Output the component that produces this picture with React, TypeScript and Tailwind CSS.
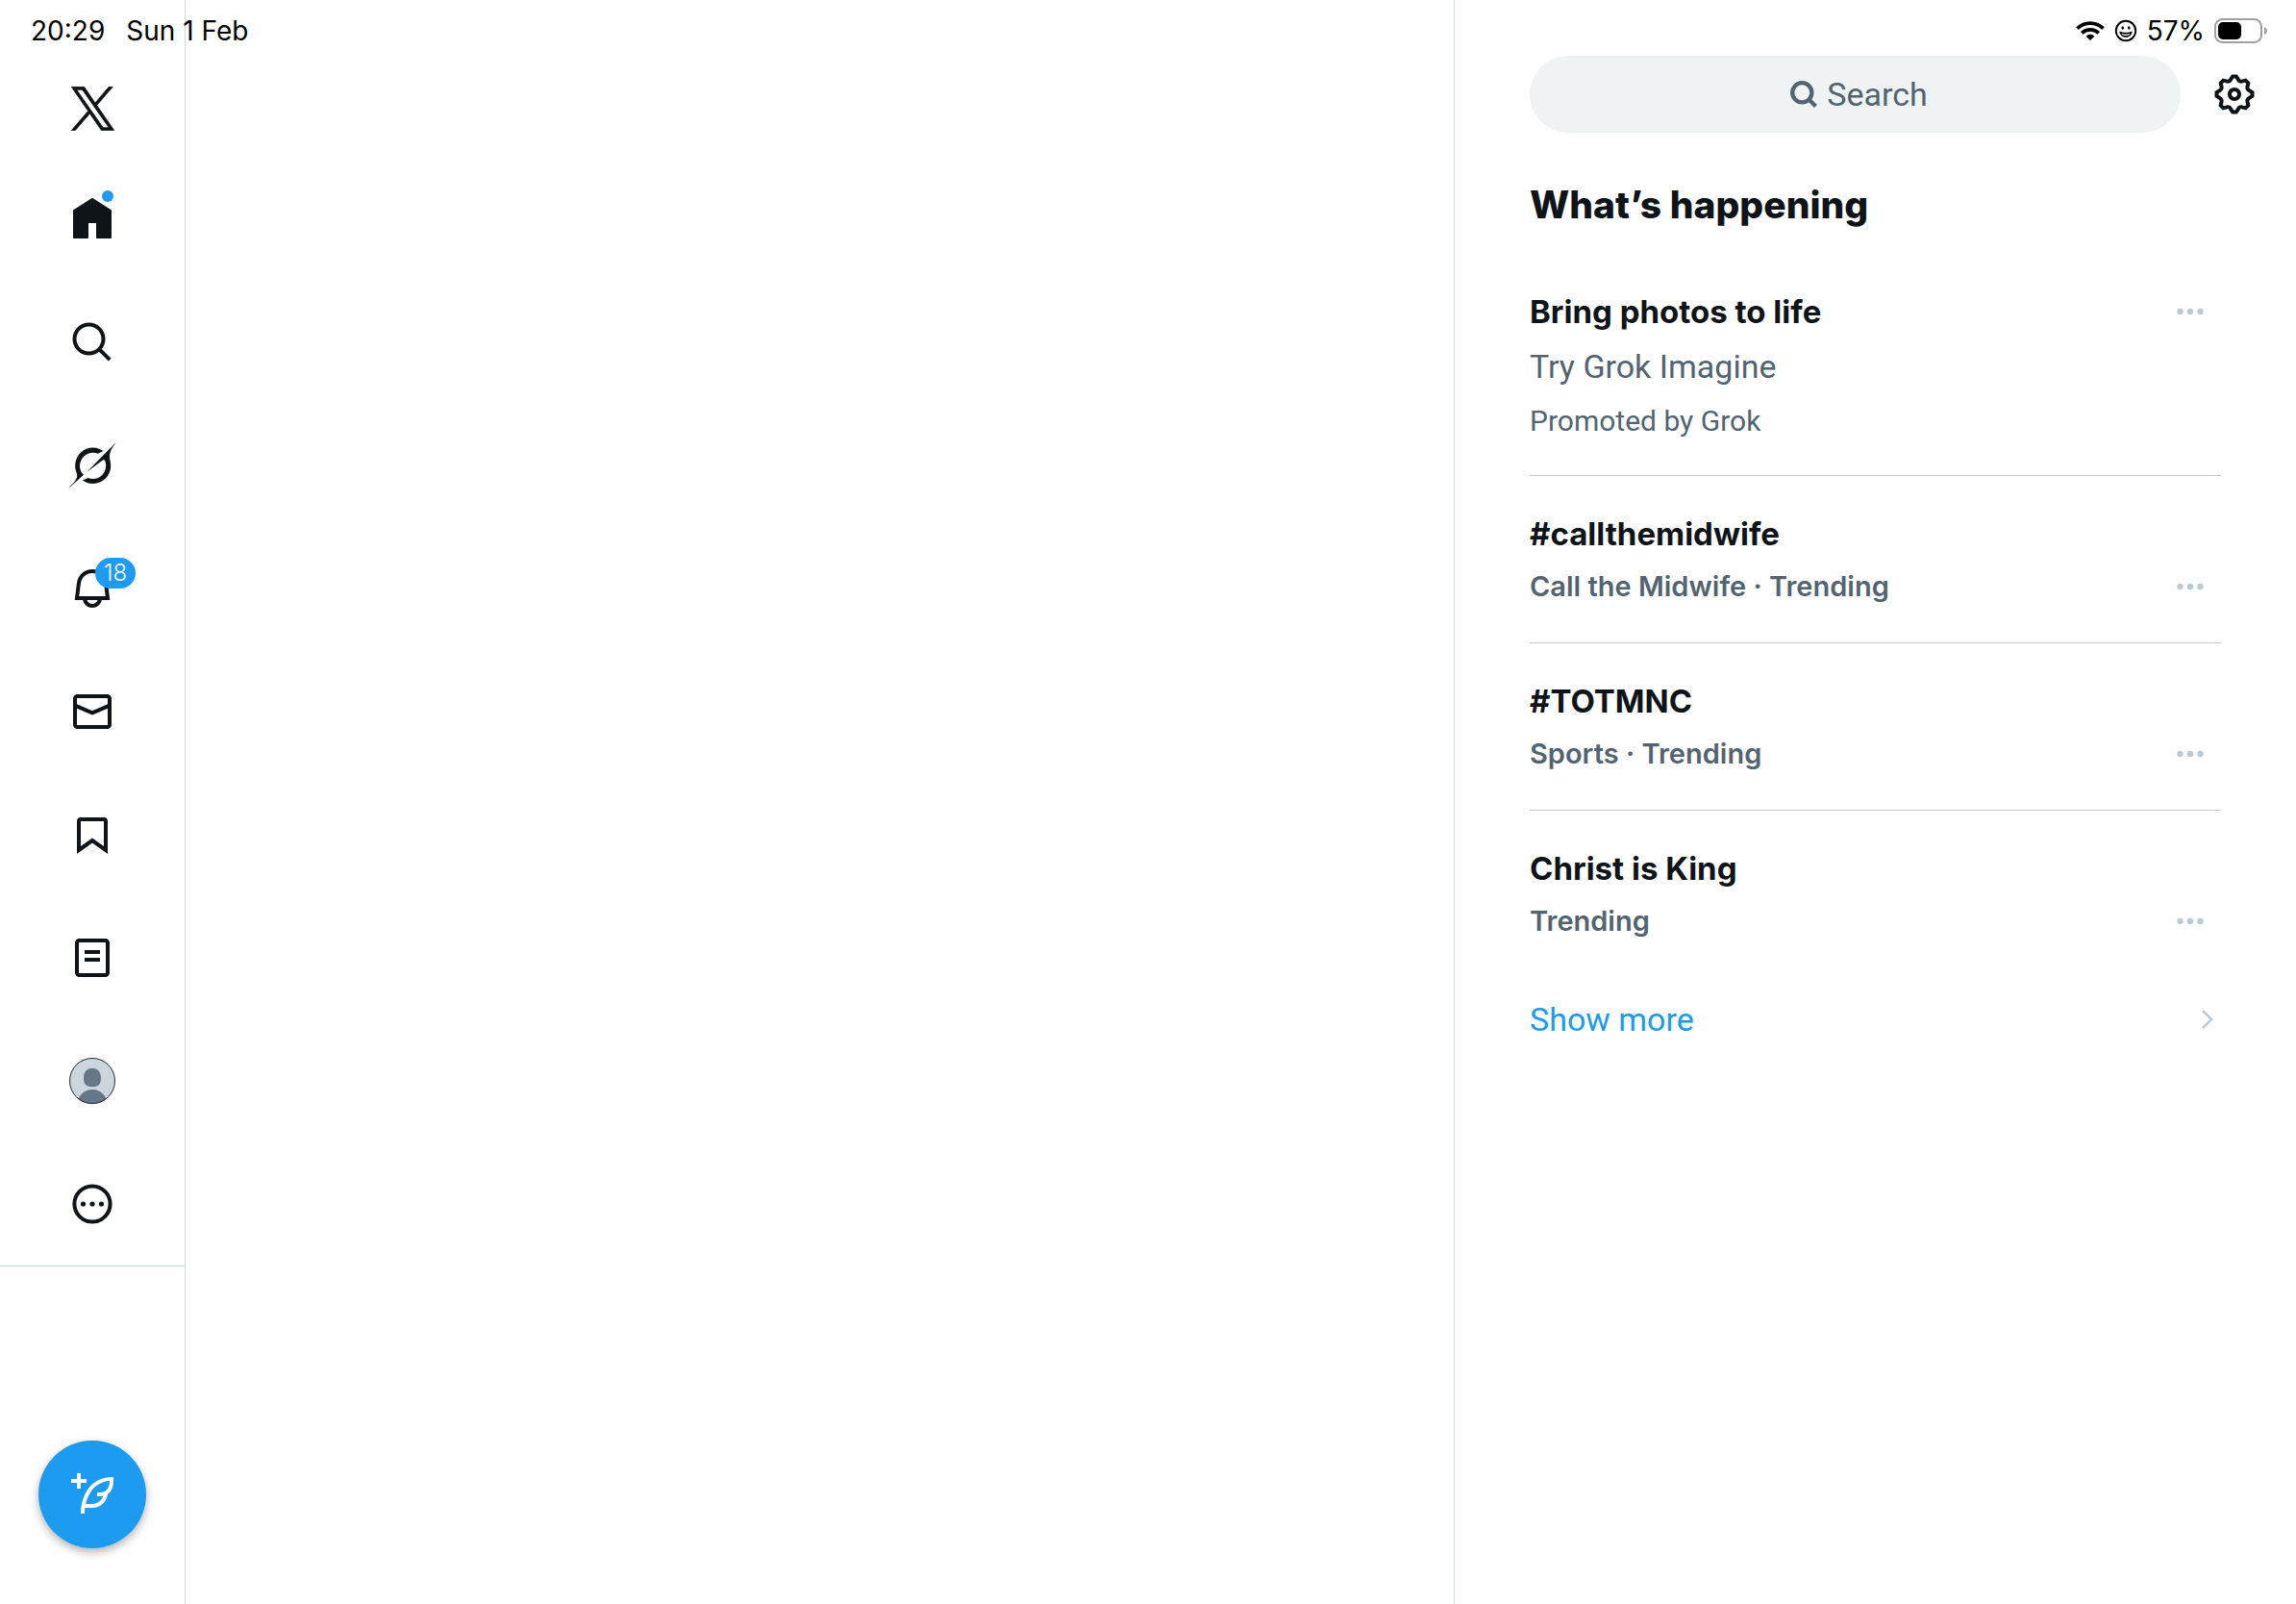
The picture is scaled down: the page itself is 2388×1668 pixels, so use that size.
import React from "react";

type IconProps = { className?: string; children: React.ReactNode };

const Icon: React.FC<IconProps> = ({ className = "size-12", children }) => (
  <svg viewBox="0 0 24 24" className={className} fill="currentColor" aria-hidden="true">
    {children}
  </svg>
);

const XLogo = () => (
  <svg viewBox="-10 -10 1220 1247" className="h-[46px] w-[45px]" fill="currentColor" stroke="currentColor" strokeWidth="22" aria-hidden="true">
    <path d="M714.163 519.284L1160.89 0H1055.03L667.137 450.887L357.328 0H0L468.492 681.821L0 1226.37H105.866L515.491 750.218L842.672 1226.37H1200L714.137 519.284H714.163ZM569.165 687.828L521.697 619.934L144.011 79.6944H306.615L611.412 515.685L658.88 583.579L1055.08 1150.3H892.476L569.165 687.854V687.828Z" />
  </svg>
);

const HomeIcon = () => (
  <Icon>
    <path d="M12 .9 2 7.3v14.2c0 .28.22.5.5.5h7c.28 0 .5-.22.5-.5V14h4v7.5c0 .28.22.5.5.5h7c.28 0 .5-.22.5-.5V7.3z" />
  </Icon>
);

const SearchIcon = () => (
  <Icon>
    <g fill="none" stroke="currentColor" strokeWidth="2">
      <circle cx="10.25" cy="10.25" r="7.5" />
      <path d="M15.6 15.6l5.5 5.5" />
    </g>
  </Icon>
);

const GrokIcon = () => (
  <svg viewBox="0 0 33 32" className="h-12 w-[50px]" fill="currentColor" aria-hidden="true">
    <path d="M12.745 20.54l10.97-8.19c.539-.4 1.307-.244 1.564.38 1.349 3.288.746 7.241-1.938 9.955-2.683 2.714-6.417 3.31-9.83 1.954l-3.728 1.745c5.347 3.697 11.84 2.782 15.898-1.324 3.219-3.255 4.216-7.692 3.284-11.693l.008.009c-1.351-5.878.332-8.227 3.782-13.031L33 0l-4.54 4.59v-.014L12.743 20.544m-2.263 1.987c-3.837-3.707-3.175-9.446.1-12.755 2.42-2.449 6.388-3.448 9.852-1.979l3.72-1.737c-.67-.49-1.53-1.017-2.515-1.387-4.455-1.854-9.789-.931-13.41 2.728-3.483 3.523-4.579 8.94-2.697 13.561 1.405 3.454-.899 5.898-3.22 8.364C1.49 30.2.666 31.074 0 32l10.478-9.466" />
  </svg>
);

const BellIcon = () => (
  <Icon>
    <path d="M19.993 9.042C19.48 5.017 16.054 2 11.996 2s-7.49 3.021-7.999 7.051L2.866 18H7.1c.463 2.282 2.481 4 4.9 4s4.437-1.718 4.9-4h4.236l-1.143-8.958zM12 20c-1.306 0-2.417-.835-2.829-2h5.658c-.412 1.165-1.523 2-2.829 2zm-6.866-4l.847-6.698C6.364 6.272 8.941 4 11.996 4s5.627 2.268 6.013 5.295L18.864 16H5.134z" />
  </Icon>
);

const MailIcon = () => (
  <Icon>
    <g fill="none" stroke="currentColor" strokeWidth="2">
      <rect x="3" y="4" width="18" height="16" rx="1.3" />
      <path d="M3 8.8l9 3.9 9-3.9" />
    </g>
  </Icon>
);

const BookmarkIcon = () => (
  <Icon>
    <path d="M5 20V5a1 1 0 0 1 1-1h12a1 1 0 0 1 1 1v15l-7-5z" fill="none" stroke="currentColor" strokeWidth="2" />
  </Icon>
);

const ListIcon = () => (
  <Icon>
    <rect x="4" y="3" width="16" height="18" rx="1.3" fill="none" stroke="currentColor" strokeWidth="2" />
    <path d="M8 8h8v2H8zM8 12h8v2H8z" />
  </Icon>
);

const Avatar = () => (
  <svg viewBox="0 0 48 48" className="size-12" aria-hidden="true">
    <clipPath id="avatar">
      <circle cx="24" cy="24" r="24" />
    </clipPath>
    <g clipPath="url(#avatar)">
      <rect width="48" height="48" fill="#ccd6dd" />
      <path d="M24 10.7c-5.4 0-9 4-9 9.6 0 6.4 1.8 10 9 10s9-3.6 9-10c0-5.6-3.6-9.6-9-9.6z" fill="#667788" />
      <path d="M8 48c1.5-9.5 8-15 16-15s14.5 5.5 16 15z" fill="#667788" />
    </g>
    <circle cx="24" cy="24" r="23.5" fill="none" stroke="#2b333a" />
  </svg>
);

const MoreCircleIcon = () => (
  <Icon>
    <circle cx="12" cy="12" r="9.3" fill="none" stroke="currentColor" strokeWidth="2" />
    <circle cx="7.25" cy="12" r="1.3" />
    <circle cx="12" cy="12" r="1.3" />
    <circle cx="16.75" cy="12" r="1.3" />
  </Icon>
);

const ComposeIcon = () => (
  <Icon>
    <path d="M23 3c-6.62-.1-10.38 2.421-13.05 6.03C7.29 12.61 6 17.331 6 22h2c0-1.007.07-2.012.19-3H12c4.1 0 7.48-3.1 7.94-7.054C22.79 10.147 23.17 6.359 23 3zm-7 8h-1.5v2H16c.63-.016 1.2-.08 1.72-.188C16.95 15.24 14.68 17 12 17H8.55c.57-2.512 1.57-4.851 3-6.78 2.16-2.912 5.29-4.911 9.45-5.187C20.95 8.079 19.9 11 16 11zM4 9V6H1V4h3V1h2v3h3v2H6v3H4z" />
  </Icon>
);

const GearIcon = () => (
  <Icon>
    <path d="M10.54 1.75h2.92l1.57 2.36c.11.17.32.25.53.21l2.53-.59 2.17 2.17-.58 2.54c-.05.2.04.41.21.53l2.36 1.57v2.92l-2.36 1.57c-.17.12-.26.33-.21.53l.58 2.54-2.17 2.17-2.53-.59c-.21-.04-.42.04-.53.21l-1.57 2.36h-2.92l-1.58-2.36c-.11-.17-.32-.25-.52-.21l-2.54.59-2.17-2.17.58-2.54c.05-.2-.03-.41-.21-.53l-2.35-1.57v-2.92L4.1 8.97c.18-.12.26-.33.21-.53L3.73 5.9 5.9 3.73l2.54.59c.2.04.41-.04.52-.21l1.58-2.36zm1.07 2l-.98 1.47C10.05 6.08 9 6.5 7.99 6.27l-1.46-.34-.6.6.33 1.46c.24 1.01-.18 2.07-1.05 2.64l-1.46.98v.78l1.46.98c.87.57 1.29 1.63 1.05 2.64l-.33 1.46.6.6 1.46-.34c1.01-.23 2.06.19 2.64 1.05l.98 1.47h.78l.97-1.47c.58-.86 1.63-1.28 2.65-1.05l1.45.34.61-.6-.34-1.46c-.23-1.01.18-2.07 1.05-2.64l1.47-.98v-.78l-1.47-.98c-.87-.57-1.28-1.63-1.05-2.64l.34-1.46-.61-.6-1.45.34c-1.02.23-2.07-.19-2.65-1.05l-.97-1.47h-.78zM12 10.5c-.83 0-1.5.67-1.5 1.5s.67 1.5 1.5 1.5c.83 0 1.5-.67 1.5-1.5s-.67-1.5-1.5-1.5zM8.5 12c0-1.93 1.56-3.5 3.5-3.5 1.93 0 3.5 1.57 3.5 3.5s-1.57 3.5-3.5 3.5c-1.94 0-3.5-1.57-3.5-3.5z" />
  </Icon>
);

const StatusBar = () => (
  <header className="absolute inset-x-0 top-0 z-10 flex h-16 items-center justify-between pr-[30px] pl-8 text-[28px] leading-8 text-black">
    <div className="flex gap-[22px]">
      <span>20:29</span>
      <span>Sun 1 Feb</span>
    </div>
    <div className="flex items-center gap-[10px]">
      <svg viewBox="0 0 30 20" className="h-5 w-[30px]" aria-label="Wi-Fi">
        <g fill="none" stroke="#000" strokeWidth="3.7">
          <path d="M1.5 7.6a19.2 19.2 0 0 1 27 0" />
          <path d="M6.3 12.4a12.4 12.4 0 0 1 17.4 0" />
        </g>
        <path d="M15 20l-4.4-4.3a6.2 6.2 0 0 1 8.8 0z" />
      </svg>
      <svg viewBox="0 0 24 24" className="size-6" aria-label="Focus">
        <circle cx="12" cy="12" r="10.2" fill="none" stroke="#000" strokeWidth="1.9" />
        <ellipse cx="8.7" cy="9" rx="1.3" ry="1.7" />
        <ellipse cx="15.3" cy="9" rx="1.3" ry="1.7" />
        <path d="M5.3 12.5c2 .9 4.3 1.2 6.7 1.2s4.700-.3 6.700-1.200c-.2 3.700-3 6.300-6.700 6.300s-6.500-2.600-6.700-6.300z" />
        <path d="M7.400 15c2.900.7 6.300.7 9.200 0-.4.800-.9 1.300-1.500 1.600-2 .4-4.200.4-6.200 0-.6-.3-1.100-.8-1.500-1.600z" fill="#fff" />
      </svg>
      <span>57%</span>
      <svg viewBox="0 0 55 26" className="h-[26px] w-[55px]" aria-label="Battery">
        <rect x="1" y="1" width="48" height="24" rx="7.5" fill="none" stroke="#a0a0a0" strokeWidth="2" />
        <rect x="4" y="4" width="24" height="18" rx="5" />
        <path d="M52 9c2 .8 3 2.3 3 4s-1 3.200-3 4z" fill="#a0a0a0" />
      </svg>
    </div>
  </header>
);

const navItems = [
  { label: "Home", icon: <HomeIcon />, dot: true },
  { label: "Explore", icon: <SearchIcon /> },
  { label: "Grok", icon: <GrokIcon /> },
  { label: "Notifications", icon: <BellIcon />, count: 18 },
  { label: "Messages", icon: <MailIcon /> },
  { label: "Bookmarks", icon: <BookmarkIcon /> },
  { label: "Lists", icon: <ListIcon /> },
  { label: "Profile", icon: <Avatar /> },
  { label: "More", icon: <MoreCircleIcon /> },
];

const Sidebar = () => (
  <div className="flex w-[193px] shrink-0 flex-col border-r border-[#cfd9e2]">
    <nav className="flex flex-col border-b border-[#c3d3dc]">
      <a href="#" aria-label="X" className="flex h-[164px] items-center justify-center pt-[62px]">
        <XLogo />
      </a>
      {navItems.map((item) => (
        <a key={item.label} href="#" aria-label={item.label} className="flex h-32 items-center justify-center">
          <span className="relative">
            {item.icon}
            {item.dot && <span className="absolute -top-[6px] left-[34px] size-3 rounded-full bg-[#1d9bf0]" />}
            {item.count && (
              <span className="absolute -top-2 left-[27px] flex h-8 w-[42px] items-center justify-center rounded-full bg-[#1d9bf0] text-2xl leading-8 font-light text-white">
                {item.count}
              </span>
            )}
          </span>
        </a>
      ))}
    </nav>
    <button
      type="button"
      aria-label="Post"
      className="mx-auto mt-auto mb-[58px] flex size-28 items-center justify-center rounded-full bg-[#1d9bf0] text-white shadow-[0_4px_10px_rgba(0,0,0,0.3)]"
    >
      <ComposeIcon />
    </button>
  </div>
);

const MoreButton = () => (
  <button type="button" aria-label="More options" className="mr-[18px] text-[#b9cad3]">
    <svg viewBox="0 0 28 8" className="h-2 w-7" fill="currentColor" aria-hidden="true">
      <circle cx="3.5" cy="4" r="3.2" />
      <circle cx="14" cy="4" r="3.2" />
      <circle cx="24.5" cy="4" r="3.2" />
    </svg>
  </button>
);

const trends = [
  { title: "#callthemidwife", context: "Call the Midwife · Trending" },
  { title: "#TOTMNC", context: "Sports · Trending" },
  { title: "Christ is King", context: "Trending" },
];

const Trends = () => (
  <section className="pr-[78px]">
    <h1 className="mt-[51px] mb-[27px] text-[39px] leading-[48px] font-extrabold">What’s happening</h1>
    <ul>
      <li className="border-b border-[#c6c8ca] pt-[33px] pb-[30px]">
        <div className="flex items-center justify-between">
          <h2 className="text-[33px] leading-[54px] font-bold">Bring photos to life</h2>
          <MoreButton />
        </div>
        <p className="font-[Roboto,sans-serif] text-[34px] leading-[60px] text-[#536471]">Try Grok Imagine</p>
        <p className="font-[Roboto,sans-serif] text-[30px] leading-[53px] text-[#536471]">Promoted by Grok</p>
      </li>
      {trends.map((trend) => (
        <li key={trend.title} className="border-b border-[#c6c8ca] pt-[33px] pb-[30px] last:border-b-0">
          <h2 className="text-[33px] leading-[54px] font-bold">{trend.title}</h2>
          <div className="flex items-center justify-between">
            <p className="text-[29px] leading-[56px] font-semibold text-[#536471]">{trend.context}</p>
            <MoreButton />
          </div>
        </li>
      ))}
    </ul>
    <a href="#" className="mt-4 flex items-center justify-between font-[Roboto,sans-serif] text-[34px] leading-[56px] text-[#1d9bf0]">
      Show more
      <svg viewBox="0 0 12 20" className="mr-2 h-5 w-3" fill="none" stroke="#b9cad3" strokeWidth="2.5" aria-hidden="true">
        <path d="M1 1l9.300 9L1 19" />
      </svg>
    </a>
  </section>
);

const App: React.FC = () => {
  return (
    <div className="relative flex min-h-screen bg-white font-[Inter,sans-serif] text-[#0f1419]">
      <StatusBar />
      <Sidebar />
      <main className="flex-1" />
      <aside className="w-[876px] shrink-0 border-l border-[#cfd9de] pt-[58px] pl-[78px]">
        <div className="flex items-center gap-8 pr-10">
          <label className="flex h-20 flex-1 items-center justify-center gap-[10px] rounded-full bg-[#eff3f4] pl-2 text-[#536471]">
            <svg viewBox="0 0 28 28" className="size-7" fill="none" stroke="currentColor" strokeWidth="4.3" aria-hidden="true">
              <circle cx="12.3" cy="12.3" r="10.1" />
              <path d="M19.500 19.500l7 7" />
            </svg>
            <input
              type="text"
              aria-label="Search"
              placeholder="Search"
              className="field-sizing-content bg-transparent font-[Roboto,sans-serif] text-[34px] outline-none placeholder:text-[#536471]"
            />
          </label>
          <button type="button" aria-label="Settings">
            <GearIcon />
          </button>
        </div>
        <Trends />
      </aside>
    </div>
  );
};

export default App;
